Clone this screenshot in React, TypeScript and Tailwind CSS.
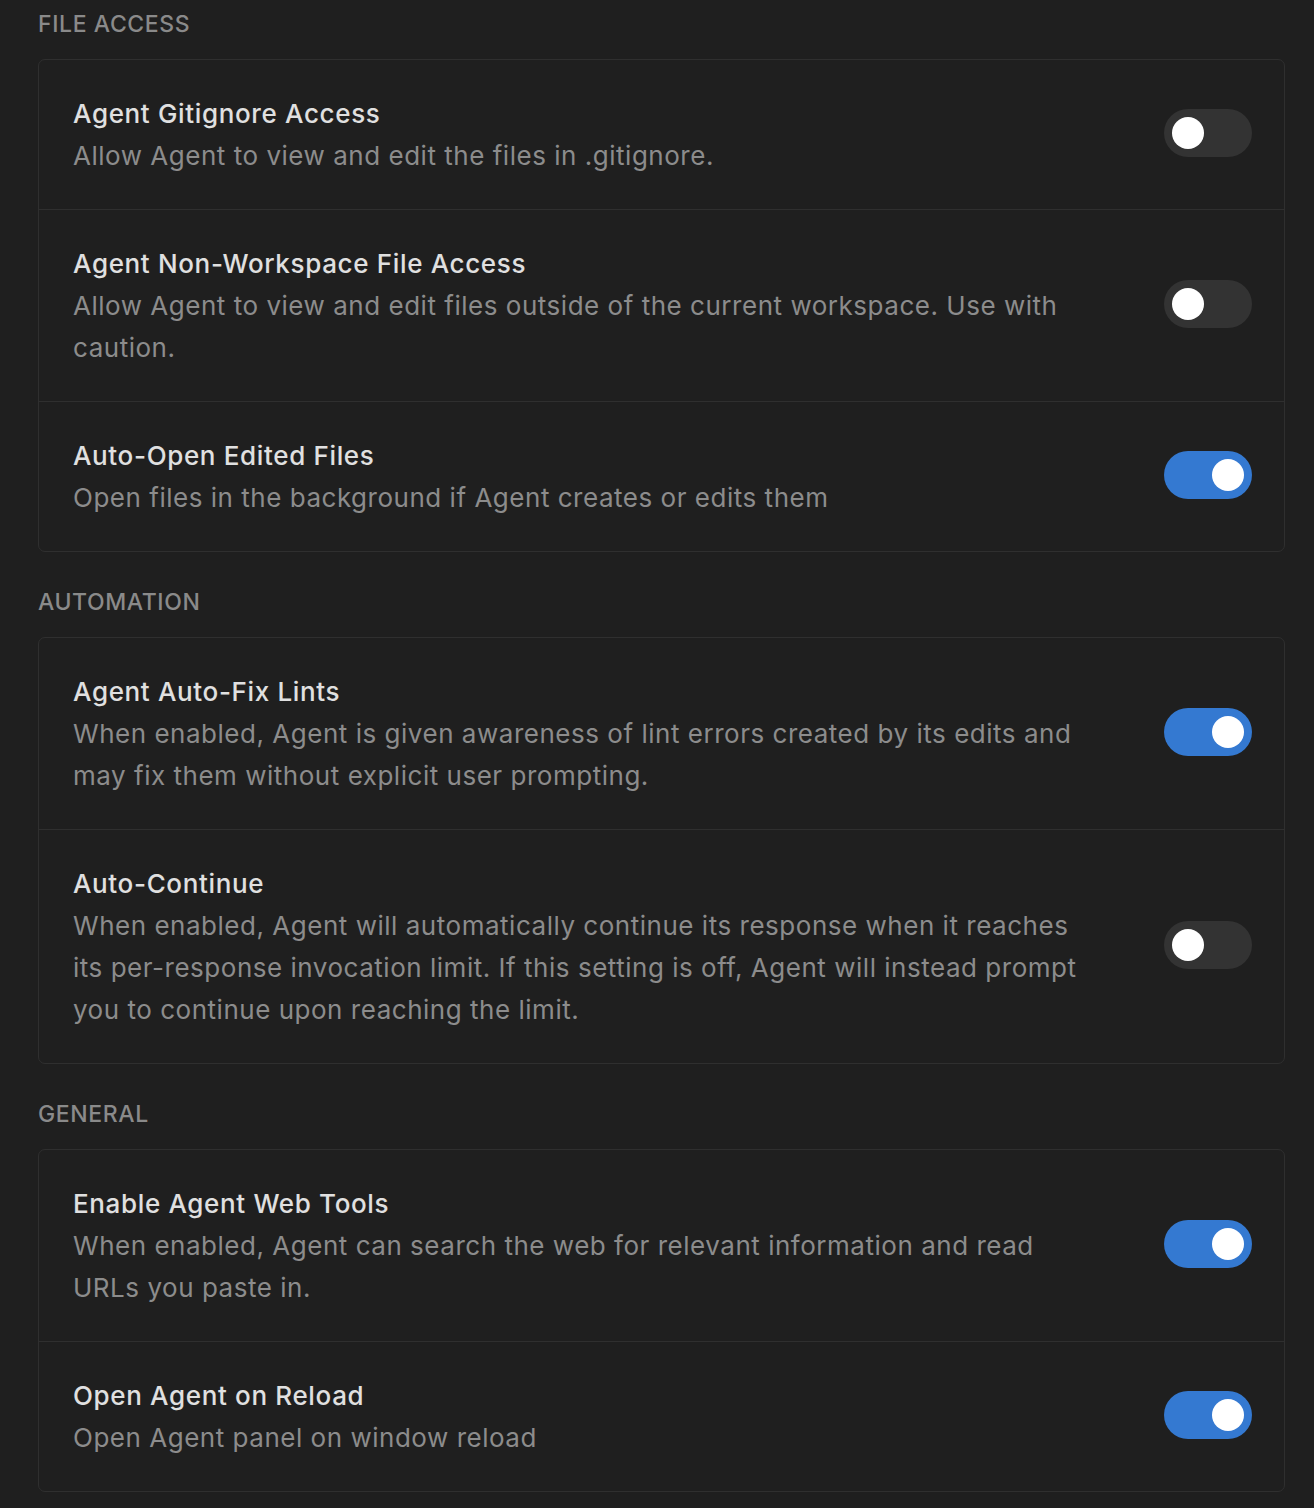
import { useState } from 'react';

interface Setting {
  title: string;
  description: string;
  enabled: boolean;
}

interface Section {
  heading: string;
  items: Setting[];
}

const sections: Section[] = [
  {
    heading: 'File Access',
    items: [
      {
        title: 'Agent Gitignore Access',
        description: 'Allow Agent to view and edit the files in .gitignore.',
        enabled: false,
      },
      {
        title: 'Agent Non-Workspace File Access',
        description:
          'Allow Agent to view and edit files outside of the current workspace. Use with caution.',
        enabled: false,
      },
      {
        title: 'Auto-Open Edited Files',
        description: 'Open files in the background if Agent creates or edits them',
        enabled: true,
      },
    ],
  },
  {
    heading: 'Automation',
    items: [
      {
        title: 'Agent Auto-Fix Lints',
        description:
          'When enabled, Agent is given awareness of lint errors created by its edits and may fix them without explicit user prompting.',
        enabled: true,
      },
      {
        title: 'Auto-Continue',
        description:
          'When enabled, Agent will automatically continue its response when it reaches its per-response invocation limit. If this setting is off, Agent will instead prompt you to continue upon reaching the limit.',
        enabled: false,
      },
    ],
  },
  {
    heading: 'General',
    items: [
      {
        title: 'Enable Agent Web Tools',
        description:
          'When enabled, Agent can search the web for relevant information and read URLs you paste in.',
        enabled: true,
      },
      {
        title: 'Open Agent on Reload',
        description: 'Open Agent panel on window reload',
        enabled: true,
      },
    ],
  },
];

const Toggle = ({ on, onChange }: { on: boolean; onChange: () => void }) => (
  <button
    onClick={onChange}
    className={`mb-[5px] flex h-[48px] w-[88px] shrink-0 items-center rounded-full px-[8px] ${
      on ? 'justify-end bg-[#3479d1]' : 'justify-start bg-[#333333]'
    }`}
  >
    <span className="block h-[32px] w-[32px] rounded-full bg-white" />
  </button>
);

const SettingRow = ({ item }: { item: Setting }) => {
  const [on, setOn] = useState(item.enabled);
  return (
    <div className="flex items-center justify-between gap-[64px] border-b border-[#2f2f2f] pt-[33px] pb-[32px] pl-[34px] pr-[32px] last:border-b-0">
      <div className="flex-1">
        <div className="text-[26px] leading-[42px] font-medium tracking-[0.65px] text-[#e0e0e0]">
          {item.title}
        </div>
        <div className="text-[26px] leading-[42px] tracking-[0.52px] text-[#8c8c8c]">
          {item.description}
        </div>
      </div>
      <Toggle on={on} onChange={() => setOn(!on)} />
    </div>
  );
};

export default function App() {
  return (
    <div
      className="min-h-[1508px] bg-[#1f1f1f] pl-[38px] pr-[29px] pt-[9px]"
      style={{ fontFamily: 'Inter, "Noto Sans", sans-serif' }}
    >
      {sections.map((section, i) => (
        <div key={section.heading} className={i > 0 ? 'mt-[35px]' : ''}>
          <h2 className="text-[23px] leading-[30px] font-medium uppercase tracking-[0.6px] text-[#8a8a8a]">
            {section.heading}
          </h2>
          <div className="mt-[20px] rounded-[7px] border border-[#2f2f2f]">
            {section.items.map((item) => (
              <SettingRow key={item.title} item={item} />
            ))}
          </div>
        </div>
      ))}
    </div>
  );
}
